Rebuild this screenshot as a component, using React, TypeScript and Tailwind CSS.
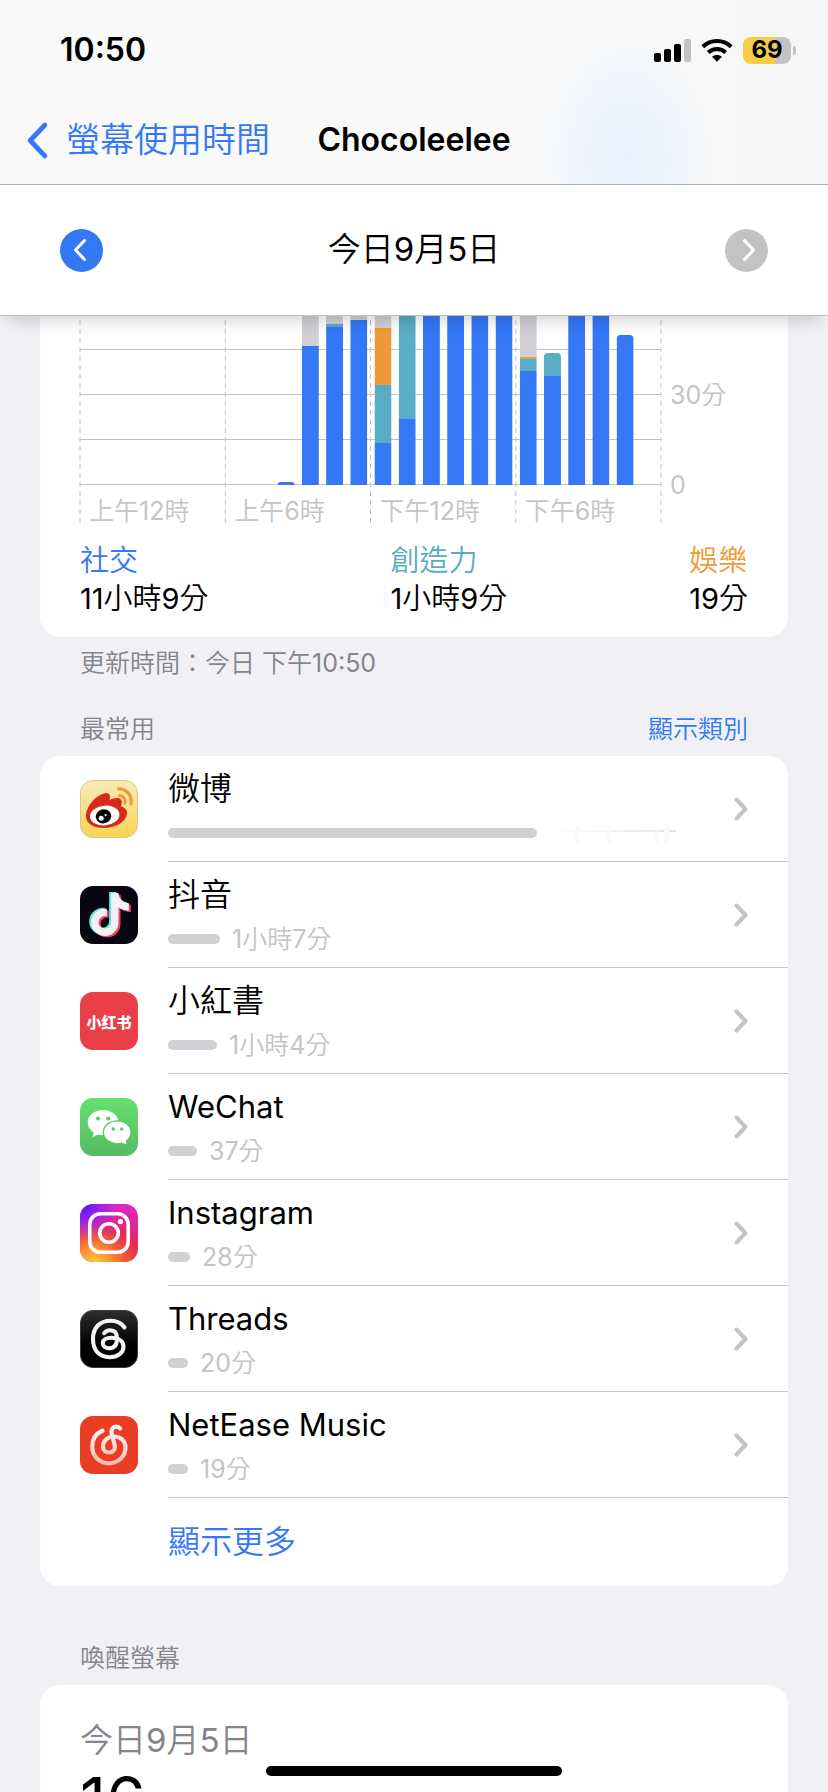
import type { ReactNode } from 'react'
import { FaTiktok } from 'react-icons/fa6'

interface HourUsage {
  hour: number
  social?: number
  creative?: number
  fun?: number
  other?: number
}

interface AppUsage {
  name: string
  lang: 'zh' | 'en'
  icon: ReactNode
  bar: number
  time?: string
}

const PLOT_HEIGHT = 169
const BAR_WIDTH = 17

// Stack heights in pixels, three pixels to the minute
const HOURS: HourUsage[] = [
  { hour: 8, social: 3 },
  { hour: 9, social: 139, other: 41 },
  { hour: 10, social: 158, creative: 3, other: 19 },
  { hour: 11, social: 165, other: 15 },
  { hour: 12, social: 42, creative: 58, fun: 57, other: 23 },
  { hour: 13, social: 66, creative: 114 },
  { hour: 14, social: 180 },
  { hour: 15, social: 180 },
  { hour: 16, social: 180 },
  { hour: 17, social: 180 },
  { hour: 18, social: 114, creative: 12, fun: 2, other: 52 },
  { hour: 19, social: 109, creative: 23 },
  { hour: 20, social: 180 },
  { hour: 21, social: 180 },
  { hour: 22, social: 150 },
]

const CATEGORIES = [
  { label: '社交', time: '11小時9分', color: 'text-[#3478f6]' },
  { label: '創造力', time: '1小時9分', color: 'text-[#59adc4]' },
  { label: '娛樂', time: '19分', color: 'text-[#ef9a37]' },
]

const APPS: AppUsage[] = [
  { name: '微博', lang: 'zh', icon: <WeiboIcon />, bar: 369 },
  { name: '抖音', lang: 'zh', icon: <DouyinIcon />, bar: 52, time: '1小時7分' },
  { name: '小紅書', lang: 'zh', icon: <RedbookIcon />, bar: 49, time: '1小時4分' },
  { name: 'WeChat', lang: 'en', icon: <WeChatIcon />, bar: 29, time: '37分' },
  { name: 'Instagram', lang: 'en', icon: <InstagramIcon />, bar: 22, time: '28分' },
  { name: 'Threads', lang: 'en', icon: <ThreadsIcon />, bar: 20, time: '20分' },
  { name: 'NetEase Music', lang: 'en', icon: <NetEaseIcon />, bar: 20, time: '19分' },
]

function WeiboIcon() {
  return (
    <svg viewBox="0 0 58 58" className="size-full">
      <defs>
        <linearGradient id="weibo-bg" x1="0" y1="0" x2="0" y2="1">
          <stop offset="0" stopColor="#f9ebb8" />
          <stop offset="1" stopColor="#f8d552" />
        </linearGradient>
      </defs>
      <rect x="0.5" y="0.5" width="57" height="57" rx="12.5" fill="url(#weibo-bg)" stroke="#d9c68a" />
      <path
        d="M6 36C6 27 15 15.500 25 13.200C29 12.500 31 15.500 29.500 20C34 17.500 40 17 41.300 20C42.200 22 42 24 40.800 26.200C45 27.500 47.500 30 47 34C45.500 42.500 35 48 24 48C13 48 6 43.500 6 36Z"
        fill="#d9291c"
      />
      <ellipse cx="24.700" cy="35.500" rx="14.800" ry="9.800" transform="rotate(-6 24.700 35.500)" fill="#fff" />
      <ellipse cx="23.500" cy="36.300" rx="7.800" ry="7" transform="rotate(-15 23.500 36.300)" fill="#000" />
      <circle cx="21.200" cy="38.300" r="2.500" fill="#fff" />
      <circle cx="25.600" cy="35.200" r="1.100" fill="#fff" />
      <g fill="none" stroke="#ec9c35" strokeLinecap="round">
        <path d="M38.500 8.800C46 8.500 52.500 15 51 24" strokeWidth="3.200" />
        <path d="M39.500 15.500C43.500 15.500 46 19 44.800 23.200" strokeWidth="2.800" />
      </g>
    </svg>
  )
}

function DouyinIcon() {
  return (
    <svg viewBox="0 0 58 58" className="size-full">
      <rect width="58" height="58" rx="13" fill="#080711" />
      <FaTiktok x="6.500" y="6" size={43} color="#5fe8e5" />
      <FaTiktok x="10.500" y="8.500" size={43} color="#ee4568" />
      <FaTiktok x="8.500" y="7" size={43} color="#f3f1f5" />
    </svg>
  )
}

function RedbookIcon() {
  return (
    <div className="grid size-full place-items-center rounded-[13px] bg-[#ea3e48] font-['Noto_Sans_CJK_SC',sans-serif] text-[15px] leading-none font-black text-white">
      小红书
    </div>
  )
}

function WeChatIcon() {
  return (
    <svg viewBox="0 0 58 58" className="size-full">
      <defs>
        <linearGradient id="wechat-bg" x1="0" y1="0" x2="0" y2="1">
          <stop offset="0" stopColor="#66e070" />
          <stop offset="1" stopColor="#56bb64" />
        </linearGradient>
      </defs>
      <rect width="58" height="58" rx="13" fill="url(#wechat-bg)" />
      <g fill="#fff">
        <path d="M14 33L12.600 39.200L19.500 35.500Z" />
        <ellipse cx="23" cy="24.500" rx="15.300" ry="12.600" />
      </g>
      <ellipse cx="37.200" cy="34.200" rx="14.500" ry="12" fill="#5dcc69" />
      <g fill="#fff">
        <ellipse cx="37.200" cy="34.200" rx="13.200" ry="10.700" />
        <path d="M40 44L46.300 46.200L45.500 40.500Z" />
      </g>
      <g fill="#5dcc69">
        <circle cx="18" cy="20.500" r="2.100" />
        <circle cx="28.200" cy="20.500" r="2.100" />
        <circle cx="33.300" cy="31" r="1.800" />
        <circle cx="41.700" cy="31" r="1.800" />
      </g>
    </svg>
  )
}

function InstagramIcon() {
  return (
    <svg viewBox="0 0 58 58" className="size-full">
      <defs>
        <linearGradient id="ig-base" x1="0.400" y1="1" x2="0.700" y2="0">
          <stop offset="0.100" stopColor="#ef4a2c" />
          <stop offset="0.500" stopColor="#e5265f" />
          <stop offset="1" stopColor="#dd28c4" />
        </linearGradient>
        <radialGradient id="ig-blue" cx="0.050" cy="0.020" r="0.700">
          <stop offset="0" stopColor="#4a1cff" />
          <stop offset="0.500" stopColor="#a421ee" stopOpacity="0.850" />
          <stop offset="1" stopColor="#d224d4" stopOpacity="0" />
        </radialGradient>
        <radialGradient id="ig-yellow" cx="0.250" cy="1.050" r="0.750">
          <stop offset="0" stopColor="#ffd23c" />
          <stop offset="0.400" stopColor="#fb9f33" stopOpacity="0.850" />
          <stop offset="1" stopColor="#f0572f" stopOpacity="0" />
        </radialGradient>
      </defs>
      <rect width="58" height="58" rx="13" fill="url(#ig-base)" />
      <rect width="58" height="58" rx="13" fill="url(#ig-blue)" />
      <rect width="58" height="58" rx="13" fill="url(#ig-yellow)" />
      <g fill="none" stroke="#fff" strokeWidth="3.600">
        <rect x="9.800" y="9.800" width="38.400" height="38.400" rx="10.500" />
        <circle cx="29" cy="29" r="9.300" />
      </g>
      <circle cx="40.400" cy="17.600" r="2.600" fill="#fff" />
    </svg>
  )
}

function ThreadsIcon() {
  return (
    <svg viewBox="0 0 58 58" className="size-full">
      <defs>
        <linearGradient id="threads-bg" x1="0" y1="0" x2="0" y2="1">
          <stop offset="0" stopColor="#2e2e2e" />
          <stop offset="0.600" stopColor="#000" />
        </linearGradient>
      </defs>
      <rect x="0.500" y="0.500" width="57" height="57" rx="12.500" fill="url(#threads-bg)" stroke="#3a3a3a" />
      <path
        d="M44.500 17.500C41.500 13 36.500 10.800 30.500 10.800C19.500 10.800 13 18 13 29C13 40.500 19.500 47.200 29.500 47.200C38 47.200 43.500 42.500 43.500 36.500C43.500 31 38.500 27.800 31.500 27.800C26 27.800 22.800 30 22.800 33.200C22.800 36.300 25.500 38.200 29.200 38.200C34.500 38.200 37 34.500 37 28.500C37 23 34.500 20.300 30.200 20.300C27.500 20.300 25.500 21.300 24.200 23.200"
        fill="none"
        stroke="#f4f4f4"
        strokeWidth="4.100"
        strokeLinecap="round"
        strokeLinejoin="round"
      />
    </svg>
  )
}

function NetEaseIcon() {
  return (
    <svg viewBox="0 0 58 58" className="size-full">
      <defs>
        <linearGradient id="netease-line" gradientUnits="userSpaceOnUse" x1="0" y1="8" x2="0" y2="50">
          <stop offset="0" stopColor="#fff" />
          <stop offset="1" stopColor="#f8b6a8" />
        </linearGradient>
      </defs>
      <rect width="58" height="58" rx="13" fill="#e93d24" />
      <path
        d="M22.500 14.800C16 17.500 12.200 23.500 12.200 30.500C12.200 40 19.500 47.300 28.800 47.300C38.200 47.300 45.500 40.500 45.500 31.500C45.500 25 40.500 20.500 34 20.500C27.500 20.500 23 25 23 30.500C23 34 25.500 36.500 29 36.500C33 36.500 35.500 33.500 34.800 30L31.800 17.500C30.800 13.500 33 10.700 36 10.700C38 10.700 39.200 11.300 40.200 12.500"
        fill="none"
        stroke="url(#netease-line)"
        strokeWidth="4.200"
        strokeLinecap="round"
      />
    </svg>
  )
}

function StatusIcons() {
  return (
    <div className="flex items-center gap-[10px]">
      <svg viewBox="0 0 37 24" className="h-6 w-[37px]">
        <rect x="0" y="15" width="7" height="9" rx="2" />
        <rect x="10" y="11" width="7" height="13" rx="2" />
        <rect x="20" y="6" width="7" height="18" rx="2" />
        <rect x="30" y="1" width="7" height="23" rx="2" fill="#c3c3c5" />
      </svg>
      <svg viewBox="0 0 32 24" className="h-6 w-8">
        <g fill="none" stroke="#000" strokeWidth="4">
          <path d="M1.800 8.800C9.800 1.200 22.200 1.200 30.200 8.800" />
          <path d="M7.300 14.500C12.300 9.800 19.700 9.800 24.700 14.500" />
        </g>
        <path d="M16 23.800L11 18.800C13.800 16.400 18.200 16.400 21 18.800Z" />
      </svg>
      <div className="flex items-center gap-[2px]">
        <div className="flex h-[27px] w-12 items-center justify-center rounded-lg bg-linear-to-r from-[#f5cd46] from-69% to-[#c3c3c5] to-69% text-2xl leading-none font-bold">
          69
        </div>
        <div className="h-[9px] w-[3px] rounded-r-full bg-[#c3c3c5]" />
      </div>
    </div>
  )
}

function Chevron({ className, strokeWidth = 4 }: { className: string; strokeWidth?: number }) {
  return (
    <svg viewBox="0 0 14 24" fill="none" stroke="currentColor" strokeWidth={strokeWidth} strokeLinecap="round" strokeLinejoin="round" className={className}>
      <path d="M2.500 2.500L11.500 12L2.500 21.500" />
    </svg>
  )
}

function HourBar({ hour, social = 0, creative = 0, fun = 0, other = 0 }: HourUsage) {
  const parts = [
    { size: social, fill: '#3478f6' },
    { size: creative, fill: '#59adc4' },
    { size: fun, fill: '#ef9a37' },
    { size: other, fill: '#d0d0d5' },
  ]
  const total = social + creative + fun + other
  const radius = Math.min(4, total)
  let y = PLOT_HEIGHT
  return (
    <svg x={`${(hour / 24) * 100}%`} width="24" height={PLOT_HEIGHT}>
      <clipPath id={`bar-${hour}`}>
        <rect x="4" y={PLOT_HEIGHT - total} width={BAR_WIDTH} height={total + 8} rx={radius} />
      </clipPath>
      <g clipPath={`url(#bar-${hour})`}>
        {parts.map((part) => {
          y -= part.size
          return <rect key={part.fill} x="4" y={y} width={BAR_WIDTH} height={part.size} fill={part.fill} />
        })}
      </g>
    </svg>
  )
}

function UsageChart() {
  return (
    <div className="flex">
      <div className="relative flex-1">
        <svg className="absolute inset-0 size-full overflow-visible" stroke="#c2c2c4">
          {['0%', '25%', '50%', '75%', '100%'].map((x) => (
            <line key={x} x1={x} x2={x} y1="4" y2="100%" strokeDasharray="5 4" />
          ))}
          {[34, 79, 124, 169].map((y) => (
            <line key={y} x1="0" x2="100%" y1={y - 0.5} y2={y - 0.5} />
          ))}
        </svg>
        <svg className="relative block w-full" height={PLOT_HEIGHT}>
          {HOURS.map((h) => (
            <HourBar key={h.hour} {...h} />
          ))}
        </svg>
        <div className="grid h-[40px] grid-cols-4 items-center pt-[11px] text-[25px] leading-7 text-[#c4c4c6]">
          {['上午12時', '上午6時', '下午12時', '下午6時'].map((label) => (
            <span key={label} className="pl-[9px]">{label}</span>
          ))}
        </div>
      </div>
      <div className="flex w-[87px] flex-col gap-[62px] pt-[65px] pl-[9px] text-[25px] leading-7 text-[#c4c4c6]">
        <span>30分</span>
        <span>0</span>
      </div>
    </div>
  )
}

function AppRow({ name, lang, icon, bar, time }: AppUsage) {
  return (
    <li>
      <a href="#" className="flex h-[106px] items-center pl-10">
        <div className="size-[58px] shrink-0">{icon}</div>
        <div className="ml-[30px] flex h-full flex-1 items-center border-b border-[#c6c6c8] pr-10">
          <div className="flex-1">
            <div className={`leading-[48px] ${lang === 'zh' ? 'text-[32px]' : 'text-[31px]'}`}>{name}</div>
            <div className="flex h-10 items-center gap-3">
              <div className="h-[10px] rounded-full bg-[#d0d0d5]" style={{ width: bar }} />
              {time ? <span className="text-[25px] leading-7 text-[#c4c4c6]">{time}</span> : <FadedTime />}
            </div>
          </div>
          <Chevron className="h-6 w-[14px] text-[#c4c4c6]" />
        </div>
      </a>
    </li>
  )
}

// Erased duration, only faint traces left
function FadedTime() {
  return (
    <svg viewBox="0 0 128 20" className="h-5 w-32">
      <defs>
        <linearGradient id="trace" x1="0" x2="1">
          <stop offset="0" stopColor="#fff" />
          <stop offset="1" stopColor="#e4e4e4" />
        </linearGradient>
      </defs>
      <rect x="0" y="7" width="127" height="2" fill="url(#trace)" />
      <g fill="#f9f9f9">
        <rect x="26" y="4" width="4" height="16" />
        <rect x="58" y="4" width="4" height="16" />
        <rect x="106" y="8" width="3" height="12" />
        <rect x="115" y="5" width="5" height="15" />
      </g>
    </svg>
  )
}

export default function App() {
  return (
    <div className="relative flex h-screen flex-col overflow-hidden bg-[#f0f0f5] font-[Inter,'Noto_Sans_CJK_TC_DemiLight','Noto_Sans_CJK_TC_Light','Noto_Sans_CJK_TC',sans-serif] text-black">
      <header className="relative z-10 shrink-0 border-b border-[#c2c2c4] bg-white shadow-[0_10px_18px_-8px_rgba(0,0,0,0.22)]">
        <div className="border-b border-[#adadaf] bg-[radial-gradient(ellipse_90px_130px_at_75.500%_85%,#e6f1ff,transparent),linear-gradient(to_right,#f9f9fa,#fafafa_60%,#f6f6f6)]">
          <div className="flex h-[100px] items-center justify-between pr-8 pl-[60px]">
            <span className="text-[32px] font-semibold">10:50</span>
            <StatusIcons />
          </div>
          <nav className="grid h-[84px] grid-cols-[1fr_auto_1fr] items-center pb-1">
            <a href="#" className="flex items-center gap-[17px] pl-[26px] text-[34px] leading-10 text-[#3478f6]">
              <Chevron className="h-[39px] w-[23px] rotate-180" strokeWidth={3} />
              螢幕使用時間
            </a>
            <h1 className="text-[32px] font-semibold">Chocoleelee</h1>
          </nav>
        </div>
        <div className="flex h-[130px] items-center justify-between px-[60px]">
          <button type="button" aria-label="前一天" className="grid size-[43px] place-items-center rounded-full bg-[#3478f6] text-white">
            <Chevron className="mr-1 h-6 w-[14px] rotate-180" strokeWidth={3} />
          </button>
          <h2 className="text-[33px]">今日9月5日</h2>
          <button type="button" aria-label="後一天" className="grid size-[43px] place-items-center rounded-full bg-[#c3c3c5] text-white">
            <Chevron className="ml-1 h-6 w-[14px]" strokeWidth={3} />
          </button>
        </div>
      </header>

      <main className="min-h-0 flex-1 overflow-hidden px-10">
        <section className="rounded-b-[20px] bg-white px-10 pb-[19px]">
          <UsageChart />
          <dl className="flex justify-between pt-[17px] text-[29px] leading-[38px]">
            {CATEGORIES.map((c) => (
              <div key={c.label}>
                <dt className={c.color}>{c.label}</dt>
                <dd>{c.time}</dd>
              </div>
            ))}
          </dl>
        </section>
        <p className="px-10 pt-3 text-[25px] leading-7 text-[#85858a]">更新時間：今日 下午10:50</p>

        <div className="flex justify-between px-10 pt-[38px] pb-[13px] text-[25px] leading-7">
          <h3 className="text-[#85858a]">最常用</h3>
          <a href="#" className="text-[#3478f6]">顯示類別</a>
        </div>
        <section className="overflow-hidden rounded-[20px] bg-white">
          <ul>
            {APPS.map((app) => (
              <AppRow key={app.name} {...app} />
            ))}
          </ul>
          <button type="button" className="h-[88px] w-full pl-32 text-left text-[32px] text-[#3478f6]">
            顯示更多
          </button>
        </section>

        <h3 className="px-10 pt-[58px] pb-[13px] text-[25px] leading-7 text-[#85858a]">喚醒螢幕</h3>
        <section className="rounded-t-[20px] bg-white px-10 pt-8">
          <p className="text-[33px] leading-[46px] text-[#85858a]">今日9月5日</p>
          <p className="text-[64px] leading-[76px]">16</p>
        </section>
      </main>

      <div className="absolute bottom-4 left-1/2 z-20 h-[10px] w-[296px] -translate-x-1/2 rounded-full bg-black" />
    </div>
  )
}
